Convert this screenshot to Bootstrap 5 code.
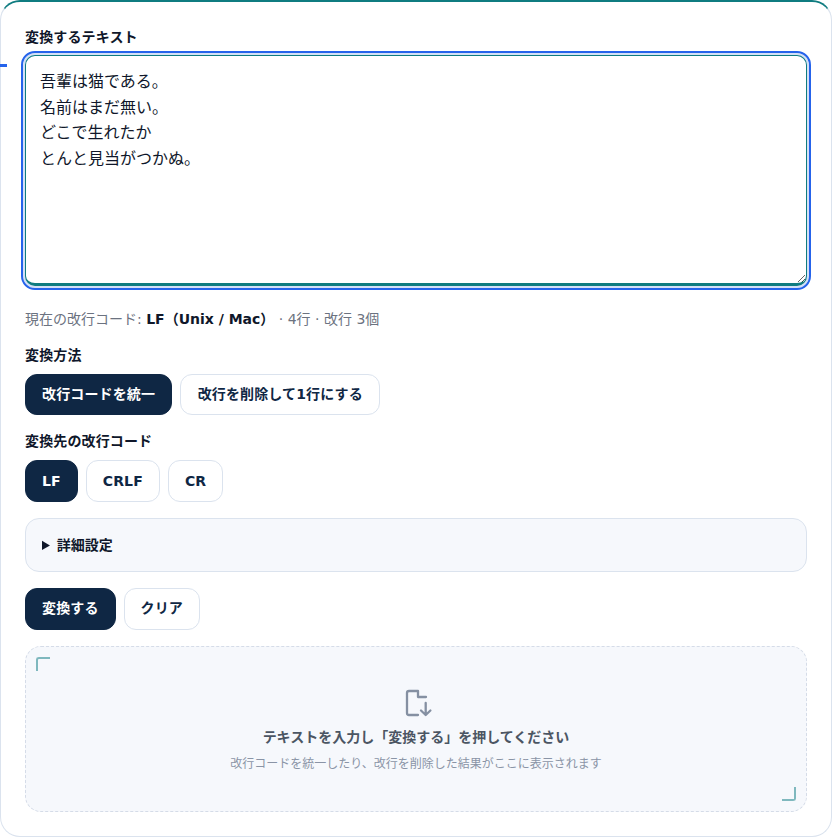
<!DOCTYPE html>
<html lang="ja">
<head>
<meta charset="utf-8">
<title>改行コード変換</title>
<link href="https://cdn.jsdelivr.net/npm/bootstrap@5.3.0/dist/css/bootstrap.min.css" rel="stylesheet">
<style>
html,body{height:100%;overflow:hidden}
body{font-family:"DejaVu Sans","Noto Sans CJK JP",sans-serif;background:#fff;color:#0f172a;font-size:14px}
.tool-panel{height:837px;border:1px solid #dbe3ee;border-top:2px solid #0f7c80;border-radius:20px;padding:25px 24px 24px;background:#fff;position:relative}
.focus-tick{position:absolute;left:-1px;top:62px;width:7px;height:3px;background:#2563eb}
.field-label{font-size:14px;font-weight:600;line-height:21px;margin:0 0 8px;color:#0f172a;letter-spacing:.01em}
.first-label{margin-bottom:7px}
.text-input,.text-input:focus{display:block;width:100%;height:231px;padding:13px 14px;border:1px solid #0f7c80;border-bottom-width:3px;border-radius:10px;font-size:16px;line-height:25.6px;color:#0f172a;outline:2px solid #2563eb;outline-offset:2px;box-shadow:0 0 0 2px #d3e0f6;margin-top:0;resize:vertical}
.status-line{font-size:14px;line-height:21px;color:#6b7280;margin:23px 0 14.800px}
.status-line strong{color:#0f172a;font-weight:700}
.choice{font-size:14px;font-weight:600;line-height:21px;height:41.600px;padding:0 16px;border-radius:12px;border:1px solid #dbe3ee;background:#fff;color:#0f2744;letter-spacing:.01em}
.choice.is-on{background:#0f2744;border-color:#0f2744;color:#fff}
.choice-wide{padding:0 16.500px}
.details-box{border:1px solid #dbe3ee;border-radius:14px;background:#f6f8fc;padding:16px;height:54px;font-weight:600;line-height:21px;color:#0f172a}
.details-box summary{cursor:pointer}
.empty-box{position:relative;height:166px;border:1px dashed #d5dce8;border-radius:16px;background:#f6f8fc;text-align:center;padding-top:41px}
.corner{position:absolute;width:14px;height:14px}
.corner-a{left:10px;top:10px;border-left:2px solid #7fb8be;border-top:2px solid #7fb8be;border-top-left-radius:3px}
.corner-b{right:10px;bottom:10px;border-right:2px solid #7fb8be;border-bottom:2px solid #7fb8be;border-bottom-right-radius:3px}
.empty-title{font-size:14px;font-weight:600;line-height:21px;color:#4b5563;margin-top:11px}
.empty-sub{font-size:12px;line-height:18px;color:#8a94a6;margin-top:7px}
.doc-icon{overflow:visible}
</style>
</head>
<body>
<div class="tool-panel">
  <span class="focus-tick"></span>
  <div class="field-label first-label">変換するテキスト</div>
  <textarea class="form-control text-input" spellcheck="false">吾輩は猫である。
名前はまだ無い。
どこで生れたか
とんと見当がつかぬ。</textarea>
  <div class="status-line">現在の改行コード: <strong>LF（Unix / Mac）</strong> · 4行 · 改行 3個</div>
  <div class="field-label">変換方法</div>
  <div class="d-flex gap-2 mb-2">
    <button type="button" class="btn choice is-on">改行コードを統一</button>
    <button type="button" class="btn choice choice-wide">改行を削除して1行にする</button>
  </div>
  <div class="field-label mt-3">変換先の改行コード</div>
  <div class="d-flex gap-2 mb-3">
    <button type="button" class="btn choice is-on">LF</button>
    <button type="button" class="btn choice">CRLF</button>
    <button type="button" class="btn choice">CR</button>
  </div>
  <details class="details-box mb-3"><summary>詳細設定</summary></details>
  <div class="d-flex gap-2 mb-3">
    <button type="button" class="btn choice is-on">変換する</button>
    <button type="button" class="btn choice">クリア</button>
  </div>
  <div class="empty-box">
    <span class="corner corner-a"></span><span class="corner corner-b"></span>
    <svg width="28" height="28" viewBox="0 0 28 28" fill="none" stroke="#8590a2" stroke-width="2.300" stroke-linecap="round" stroke-linejoin="round" class="d-block mx-auto doc-icon"><path d="M16 3H7A2 2 0 0 0 5 5V25A2 2 0 0 0 7 27H16M16 3V9H24"/><path d="M23.700 15V27M19 22.500L23.700 27L28.400 22.500"/></svg>
    <div class="empty-title">テキストを入力し「変換する」を押してください</div>
    <div class="empty-sub">改行コードを統一したり、改行を削除した結果がここに表示されます</div>
  </div>
</div>
</body>
</html>
